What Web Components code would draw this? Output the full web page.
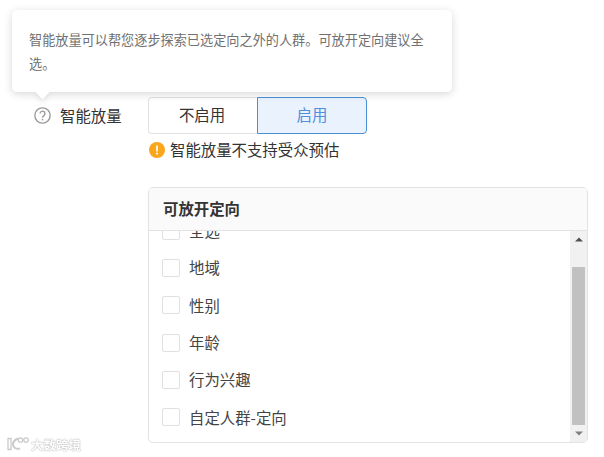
<!DOCTYPE html>
<html lang="zh">
<head>
<meta charset="utf-8">
<title>智能放量</title>
<style>
  html, body { margin: 0; background: #fff; }
  body { font-family: "Noto Sans CJK SC", "Liberation Sans", sans-serif; color: #333; }
</style>
</head>
<body>
<ad-form>
  <ad-tooltip slot="tip">智能放量可以帮您逐步探索已选定向之外的人群。可放开定向建议全选。</ad-tooltip>
  <ad-help slot="label">智能放量</ad-help>
  <ad-toggle></ad-toggle>
  <ad-warning>智能放量不支持受众预估</ad-warning>
  <ad-panel heading="可放开定向">
    <ad-check>全选</ad-check>
    <ad-check>地域</ad-check>
    <ad-check>性别</ad-check>
    <ad-check>年龄</ad-check>
    <ad-check>行为兴趣</ad-check>
    <ad-check>自定人群-定向</ad-check>
  </ad-panel>
  <ad-watermark slot="mark"></ad-watermark>
</ad-form>

<script>
class AdTooltip extends HTMLElement {
  constructor() {
    super();
    this.attachShadow({ mode: "open" });
    this.shadowRoot.innerHTML = `
      <style>
        :host {
          position: absolute;
          left: 12px;
          top: 10px;
          width: 440px;
          height: 82px;
          box-sizing: border-box;
          padding: 18px 17px 0;
          background: #fff;
          border-radius: 5px;
          box-shadow: 0 2px 9px rgba(0, 0, 0, 0.16);
          font-size: 13.17px;
          line-height: 24px;
          color: #707070;
          z-index: 2;
        }
        .arrow {
          position: absolute;
          left: 24.5px;
          bottom: -5px;
          width: 11px;
          height: 11px;
          background: #fff;
          transform: rotate(45deg);
          box-shadow: 3px 3px 5px rgba(0, 0, 0, 0.07);
        }
        .text { position: relative; }
      </style>
      <div class="arrow"></div>
      <div class="text"><slot></slot></div>
    `;
  }
}

class AdHelp extends HTMLElement {
  constructor() {
    super();
    this.attachShadow({ mode: "open" });
    this.shadowRoot.innerHTML = `
      <style>
        :host {
          display: flex;
          align-items: center;
          gap: 9px;
          height: 37px;
          font-size: 15.4px;
          color: #333;
        }
        svg { display: block; flex: none; margin-left: 1px; }
        span { margin-bottom: 2px; }
      </style>
      <svg width="17" height="17" viewBox="0 0 16 16" fill="none" stroke="#9a9a9a">
        <circle cx="8" cy="8" r="7.2" stroke-width="1.3"/>
        <path d="M5.7 6.2a2.3 2.3 0 1 1 3.6 1.9c-.8.5-1.3 1-1.3 2" stroke-width="1.3"/>
        <path d="M8 11.2v1.4" stroke-width="1.4"/>
      </svg>
      <span><slot></slot></span>
    `;
  }
}

class AdToggle extends HTMLElement {
  constructor() {
    super();
    this.attachShadow({ mode: "open" });
    this.shadowRoot.innerHTML = `
      <style>
        :host {
          display: flex;
          width: 219px;
          height: 37px;
          font-size: 15.4px;
        }
        div {
          box-sizing: border-box;
          display: flex;
          align-items: center;
          justify-content: center;
          height: 37px;
          padding-bottom: 3px;
        }
        .off {
          width: 109px;
          padding-right: 2px;
          border: 1px solid #e2e2e2;
          border-right: 0;
          border-radius: 4px 0 0 4px;
          color: #333;
        }
        .on {
          width: 110px;
          border: 1px solid #4a90d9;
          border-radius: 0 4px 4px 0;
          background: #e9f2fd;
          color: #4f8fdd;
        }
      </style>
      <div class="off">不启用</div>
      <div class="on">启用</div>
    `;
  }
}

class AdWarning extends HTMLElement {
  constructor() {
    super();
    this.attachShadow({ mode: "open" });
    this.shadowRoot.innerHTML = `
      <style>
        :host {
          display: flex;
          align-items: center;
          gap: 5px;
          height: 22px;
          margin-top: 5px;
          font-size: 15.4px;
          color: #333;
        }
        svg { display: block; flex: none; margin-left: 1px; }
        span { margin-bottom: 2px; }
      </style>
      <svg width="16" height="16" viewBox="0 0 16 16">
        <circle cx="8" cy="8" r="8" fill="#faa61a"/>
        <path d="M8 3.4v6" stroke="#fff" stroke-width="1.7"/>
        <path d="M8 10.8v1.8" stroke="#fff" stroke-width="1.8"/>
      </svg>
      <span><slot></slot></span>
    `;
  }
}

class AdCheck extends HTMLElement {
  constructor() {
    super();
    this.attachShadow({ mode: "open" });
    this.shadowRoot.innerHTML = `
      <style>
        :host {
          display: flex;
          align-items: center;
          gap: 9px;
          height: 37.3px;
          font-size: 15.4px;
          color: #444;
        }
        .box {
          flex: none;
          box-sizing: border-box;
          width: 18px;
          height: 18px;
          border: 1px solid #e0e0e0;
          border-radius: 2px;
          background: #fff;
        }
        span { margin-bottom: 1px; }
      </style>
      <div class="box"></div>
      <span><slot></slot></span>
    `;
  }
}

class AdScrollbar extends HTMLElement {
  constructor() {
    super();
    this.attachShadow({ mode: "open" });
    this.shadowRoot.innerHTML = `
      <style>
        :host {
          flex: none;
          display: flex;
          flex-direction: column;
          width: 17px;
          background: #f1f1f1;
        }
        .btn {
          flex: none;
          height: 17px;
          display: flex;
          align-items: center;
          justify-content: center;
        }
        .gap { flex: none; height: 19px; }
        .thumb {
          flex: none;
          height: 158px;
          margin: 0 2px 0 2px;
          background: #c1c1c1;
        }
        svg { display: block; }
      </style>
      <div class="btn"><svg width="8" height="5"><path d="M4 0.5L8 4.5H0z" fill="#505050"/></svg></div>
      <div class="gap"></div>
      <div class="thumb"></div>
      <div class="btn"><svg width="8" height="5"><path d="M0 0.5H8L4 4.5z" fill="#808080"/></svg></div>
    `;
  }
}

class AdPanel extends HTMLElement {
  constructor() {
    super();
    this.attachShadow({ mode: "open" });
    this.shadowRoot.innerHTML = `
      <style>
        :host {
          display: block;
          box-sizing: border-box;
          width: 440px;
          height: 256px;
          margin-top: 26px;
          border: 1px solid #e3e3e3;
          border-radius: 5px;
          overflow: hidden;
        }
        header {
          box-sizing: border-box;
          height: 43px;
          padding: 0 0 2px 14px;
          display: flex;
          align-items: center;
          background: #fafafa;
          border-bottom: 1px solid #e3e3e3;
          font-size: 15.4px;
          font-weight: 700;
          color: #333;
        }
        .body { display: flex; height: 211px; }
        .list {
          flex: 1;
          overflow: hidden;
          padding: 8px 0 6.3px 13px;
        }
      </style>
      <header></header>
      <div class="body">
        <div class="list"><slot></slot></div>
        <ad-scrollbar></ad-scrollbar>
      </div>
    `;
  }

  connectedCallback() {
    this.shadowRoot.querySelector("header").textContent = this.getAttribute("heading");
    // the list sits scrolled to its end, with the first row cut off
    const list = this.shadowRoot.querySelector(".list");
    list.scrollTop = list.scrollHeight;
  }
}

class AdWatermark extends HTMLElement {
  constructor() {
    super();
    this.attachShadow({ mode: "open" });
    this.shadowRoot.innerHTML = `
      <style>
        :host {
          position: absolute;
          left: 7px;
          top: 436px;
          display: flex;
          align-items: center;
          gap: 2px;
          height: 16px;
          font-size: 12.5px;
          font-weight: 700;
          color: #fff;
          text-shadow: 0 0 1.5px #aaa, 0 0 1px #bbb;
          filter: blur(0.4px);
        }
        svg { display: block; flex: none; }
      </style>
      <svg width="22" height="16" viewBox="0 0 22 16" fill="none" stroke="#cacaca" stroke-width="1.3">
        <path d="M1 2.5h3v11H1z" fill="#fff"/>
        <path d="M11 2.5C7.5 4 6 6 6 8.500c0 3 3 5 7 4" stroke-width="2"/>
        <circle cx="13.500" cy="4" r="2.200"/>
        <circle cx="19" cy="4" r="2.200"/>
      </svg>
      <span>大数跨境</span>
    `;
  }
}

class AdForm extends HTMLElement {
  constructor() {
    super();
    this.attachShadow({ mode: "open" });
    this.shadowRoot.innerHTML = `
      <style>
        :host {
          display: block;
          position: relative;
          box-sizing: border-box;
          width: 604px;
          height: 457px;
          padding: 97px 0 0 33px;
          overflow: hidden;
          background: #fff;
        }
        .row { display: grid; grid-template-columns: 115px 1fr; }
      </style>
      <slot name="tip"></slot>
      <div class="row">
        <div><slot name="label"></slot></div>
        <div><slot></slot></div>
      </div>
      <slot name="mark"></slot>
    `;
  }
}

customElements.define("ad-tooltip", AdTooltip);
customElements.define("ad-help", AdHelp);
customElements.define("ad-toggle", AdToggle);
customElements.define("ad-warning", AdWarning);
customElements.define("ad-check", AdCheck);
customElements.define("ad-scrollbar", AdScrollbar);
customElements.define("ad-panel", AdPanel);
customElements.define("ad-watermark", AdWatermark);
customElements.define("ad-form", AdForm);
</script>
</body>
</html>
